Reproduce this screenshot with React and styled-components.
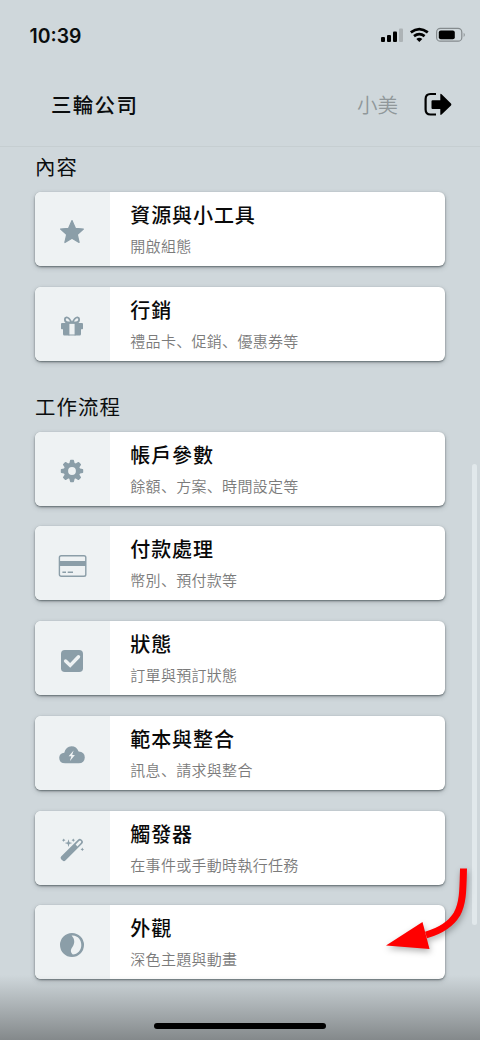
import React from 'react';
import styled, { createGlobalStyle } from 'styled-components';

const GlobalStyles = createGlobalStyle`
  * {
    box-sizing: border-box;
  }
  body {
    margin: 0;
    padding: 0;
    background: #cfd7db;
    font-family: 'Noto Sans CJK SC', sans-serif;
  }
`;

const Screen = styled.div`
  position: relative;
  width: 480px;
  height: 1040px;
  overflow: hidden;
  background: #cfd7db;
  color: #0b0d0e;
`;

const StatusBar = styled.div`
  display: flex;
  align-items: center;
  justify-content: space-between;
  height: 70px;
  padding: 0 14px 0 29.5px;
`;

const Clock = styled.span`
  padding-top: 1px;
  font-family: Inter, sans-serif;
  font-size: 19.4px;
  font-weight: 600;
  line-height: 24px;
`;

const HeaderStyles = styled.header`
  display: flex;
  align-items: center;
  height: 77px;
  padding: 0 28px 8px 51px;
  border-bottom: 1px solid #c6ced1;
`;

const Company = styled.h1`
  flex: 1;
  margin: 0;
  font-size: 20.5px;
  font-weight: 500;
  letter-spacing: 1.3px;
  line-height: 30px;
`;

const User = styled.span`
  margin-right: 26px;
  color: #90979a;
  font-size: 20.5px;
  font-weight: 350;
  line-height: 30px;
`;

const Content = styled.main`
  padding: 4px 35px 0;
`;

const Section = styled.section`
  margin-bottom: 29.8px;
`;

const SectionTitle = styled.h2`
  margin: 0 0 11px;
  font-size: 20.4px;
  font-weight: 400;
  letter-spacing: 1.1px;
  line-height: 30px;
`;

const Cards = styled.div`
  display: grid;
  gap: 20.75px;
`;

const Card = styled.article`
  display: flex;
  height: 74px;
  overflow: hidden;
  border-radius: 6px;
  background: #fff;
  box-shadow: 0 1px 2px rgba(40, 50, 55, 0.6), 0 2px 5px rgba(60, 70, 75, 0.25);
`;

const IconTile = styled.div`
  display: flex;
  align-items: center;
  justify-content: center;
  width: 74.5px;
  padding-top: 5px;
  background: #eef2f3;
  color: #8b9ea8;
`;

const CardText = styled.div`
  padding: 9px 0 0 20.8px;
`;

const CardTitle = styled.h3`
  margin: 0;
  color: #090909;
  font-size: 20px;
  font-weight: 500;
  letter-spacing: 0.9px;
  line-height: 28px;
`;

const CardNote = styled.p`
  margin: 6px 0 0;
  color: #7b7b7b;
  font-size: 15px;
  font-weight: 350;
  letter-spacing: 0.3px;
  line-height: 22px;
`;

const ScrollThumb = styled.div`
  position: absolute;
  top: 464px;
  right: 3px;
  width: 5px;
  height: 461px;
  border-radius: 3px;
  background: #e1e8eb;
`;

const BottomShade = styled.div`
  position: absolute;
  right: 0;
  bottom: 0;
  left: 0;
  height: 65px;
  background: linear-gradient(rgba(132, 137, 139, 0), #84898b);
`;

const HomeBar = styled.div`
  position: absolute;
  bottom: 11px;
  left: 154px;
  width: 172px;
  height: 6px;
  border-radius: 3px;
  background: #000;
`;

const Pointer = styled.svg`
  position: absolute;
  top: 860px;
  left: 376px;
  filter: drop-shadow(1px 3px 3px rgba(0, 0, 0, 0.3));
`;

const StatusIcons = () => (
  <svg width="86" height="18" viewBox="380 26 86 18">
    <rect x="381" y="37" width="4" height="5" rx="1" />
    <rect x="387" y="35" width="4" height="7" rx="1" />
    <rect x="393" y="31.5" width="4" height="10.5" rx="1" />
    <rect x="399" y="28.5" width="4" height="13.5" rx="1" fill="#adb3b6" />
    <g fill="none" stroke="#000" strokeWidth="2.7">
      <path d="M410.8 32.4 Q419.3 25.8 427.8 32.4" />
      <path d="M414 36.1 Q419.3 32 424.6 36.1" />
    </g>
    <path d="M416.3 38.9 Q419.3 36.7 422.3 38.9 L419.3 41.9z" />
    <rect x="436.6" y="28.4" width="25.2" height="12.8" rx="3.8" fill="none" stroke="#858b8e" strokeWidth="1.2" />
    <rect x="438.8" y="30.4" width="16" height="8.9" rx="2" />
    <path d="M463.7 32.7 Q465.8 34.8 463.7 37z" fill="#858b8e" />
  </svg>
);

const LogoutIcon = () => (
  <svg width="28" height="24" viewBox="0 -0.5 28 24">
    <path d="M12 1.5 H6.5 Q1.6 1.5 1.6 6.5 V17 Q1.6 22 6.5 22 H12" fill="none" stroke="#000" strokeWidth="2.2" />
    <path d="M7.5 8.7 Q7.5 7.7 8.5 7.7 H16.3 V2.2 Q16.3 .6 17.6 1.7 L27 11 Q27.8 12 27 13 L17.6 22.1 Q16.3 23 16.3 21.5 V16.5 H8.5 Q7.5 16.5 7.5 15.5z" />
  </svg>
);

const Star = () => (
  <path
    d="M14 2.5 L17.4 10.3 L25.4 11 L19.3 16.5 L21.1 24.5 L14 20.3 L6.9 24.5 L8.7 16.5 L2.6 11 L10.6 10.3z"
    stroke="currentColor"
    strokeWidth="1.2"
    strokeLinejoin="round"
  />
);

const Gift = () => (
  <>
    <g fill="none" stroke="currentColor" strokeWidth="1.8">
      <path d="M13.8 11 Q11 5.2 8.6 5.4 Q6.7 5.7 6.9 8 Q7.3 10.5 10 10.5 H18 Q20.7 10.5 21.1 8 Q21.3 5.7 19.4 5.4 Q17 5.2 14.2 11" />
    </g>
    <path d="M4 11 H11.4 V23.5 H6.4 Q5 23.5 5 22 V17.3 H3.7 Q3 17.3 3 16.6 V12 Q3 11 4 11z" />
    <path d="M24 11 H16.6 V23.5 H21.6 Q23 23.5 23 22 V17.3 H24.3 Q25 17.3 25 16.6 V12 Q25 11 24 11z" />
    <path d="M10.5 10.5 H17.5 V11.8 H10.5z M10.5 22.5 H17.5 V23.5 H10.5z" />
  </>
);

const Gear = () => (
  <>
    <circle cx="14" cy="14" r="6.1" fill="none" stroke="currentColor" strokeWidth="4.4" />
    {[0, 45, 90, 135, 180, 225, 270, 315].map(angle => (
      <path key={angle} d="M11.2 7 L12 3.4 Q12.1 2.8 12.8 2.8 H15.2 Q15.9 2.8 16 3.4 L16.8 7z" transform={`rotate(${angle} 14 14)`} />
    ))}
  </>
);

const CreditCard = () => (
  <>
    <rect x="1.4" y="3.7" width="26.4" height="20.6" rx="1.8" fill="none" stroke="currentColor" strokeWidth="1.4" />
    <path d="M1 9 H28 V14 H1z M4.4 19.4 H8 V21 H4.4z M9.7 19.4 H15 V21 H9.7z" />
  </>
);

const Check = () => (
  <>
    <rect x="3" y="3" width="22" height="22" rx="3.8" />
    <path d="M7.6 14 L12.2 18.4 L20.5 9.8" fill="none" stroke="#eef2f3" strokeWidth="3.4" strokeLinecap="round" />
  </>
);

const CloudBolt = () => (
  <>
    <path d="M7.2 22.3 Q1.2 22.3 1.2 16.8 Q1.4 12.2 6.3 11.7 Q7.9 5.2 13.5 5.2 Q18.6 5.2 20.6 10.4 Q26.8 10.8 26.8 16.5 Q26.5 22.3 20.7 22.3z" />
    <path d="M15.6 9.4 L10.6 15.3 H13.3 L11.8 20.3 L16.9 14 H14.2z" fill="#eef2f3" />
  </>
);

const Wand = () => (
  <>
    <path
      d="M3.1 20.6 L20.2 3.4 Q21.8 2 23.4 3.4 L24.4 4.4 Q25.8 6 24.4 7.6 L7.4 24.6 Q6 25.8 4.6 24.6 L3.1 23.2 Q2 21.9 3.1 20.6z M17.6 8.6 L19.4 10.4 L22.9 6.8 Q23.7 5.8 22.9 5 Q22 4.2 21.1 5z"
      fillRule="evenodd"
    />
    <path d="M10.5 3.3 L11.4 6.2 L14.3 7.1 L11.4 8 L10.5 10.9 L9.6 8 L6.7 7.1 L9.6 6.2z" />
    <path d="M5.7 2.4 L6.3 3.6 L7.5 4.2 L6.3 4.8 L5.7 6 L5.1 4.8 L3.9 4.2 L5.1 3.6z M15.3 2.4 L15.9 3.6 L17.1 4.2 L15.9 4.8 L15.3 6 L14.7 4.8 L13.5 4.2 L14.7 3.6z M24.3 11.6 L24.9 12.8 L26.1 13.4 L24.9 14 L24.3 15.2 L23.7 14 L22.5 13.4 L23.7 12.8z" />
  </>
);

const Contrast = () => (
  <path
    d="M14 2 A12 12 0 1 0 14 26 A12 12 0 1 0 14 2z M14.6 4.4 C20.3 4.6 23.3 9.2 23.3 14 C23.3 19.3 19.6 23.4 14.8 23.4 C12 20.8 12.6 18.6 14.6 15.8 C16.9 12.6 17 8.2 13.6 4.6z"
    fillRule="evenodd"
  />
);

const sections = [
  {
    title: '內容',
    cards: [
      { title: '資源與小工具', note: '開啟組態', icon: Star },
      { title: '行銷', note: '禮品卡、促銷、優惠券等', icon: Gift },
    ],
  },
  {
    title: '工作流程',
    cards: [
      { title: '帳戶參數', note: '餘額、方案、時間設定等', icon: Gear },
      { title: '付款處理', note: '幣別、預付款等', icon: CreditCard },
      { title: '狀態', note: '訂單與預訂狀態', icon: Check },
      { title: '範本與整合', note: '訊息、請求與整合', icon: CloudBolt },
      { title: '觸發器', note: '在事件或手動時執行任務', icon: Wand },
      { title: '外觀', note: '深色主題與動畫', icon: Contrast },
    ],
  },
];

const SettingsCard = ({ title, note, icon: Icon }) => (
  <Card>
    <IconTile>
      <svg width="28" height="28" viewBox="0 0 28 28" fill="currentColor" overflow="visible">
        <Icon />
      </svg>
    </IconTile>
    <CardText>
      <CardTitle>{title}</CardTitle>
      <CardNote>{note}</CardNote>
    </CardText>
  </Card>
);

const App = () => (
  <>
    <GlobalStyles />
    <Screen>
      <StatusBar>
        <Clock>10:39</Clock>
        <StatusIcons />
      </StatusBar>
      <HeaderStyles>
        <Company>三輪公司</Company>
        <User>小美</User>
        <LogoutIcon />
      </HeaderStyles>
      <Content>
        {sections.map(section => (
          <Section key={section.title}>
            <SectionTitle>{section.title}</SectionTitle>
            <Cards>
              {section.cards.map(card => (
                <SettingsCard key={card.title} {...card} />
              ))}
            </Cards>
          </Section>
        ))}
      </Content>
      <ScrollThumb />
      <BottomShade />
      <HomeBar />
      <Pointer width="104" height="100" viewBox="376 860 104 100">
        <path d="M463.5 868.5 C463 890 463 903 457 914 C451 924 440 931 426 935" fill="none" stroke="#f00" strokeWidth="7" />
        <path d="M386 945.5 L422.5 922 L429.5 949z" fill="#f00" />
      </Pointer>
    </Screen>
  </>
);

export default App;
